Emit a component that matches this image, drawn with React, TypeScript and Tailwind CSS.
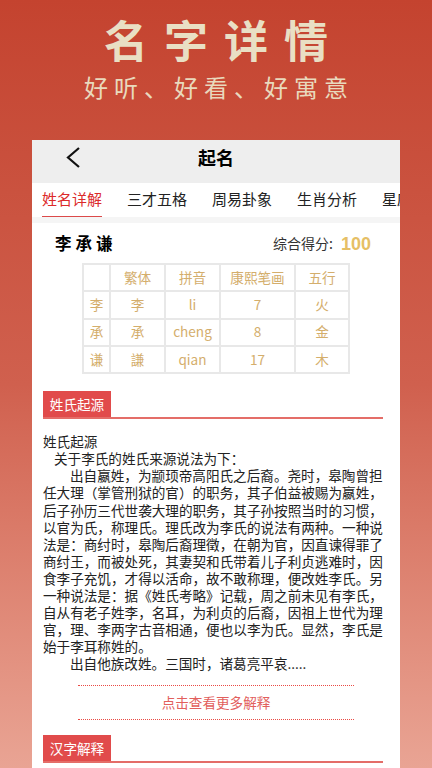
const cjk = { fontFamily: '"Noto Sans CJK SC", "Noto Sans", sans-serif' };

const tabs = ["姓名详解", "三才五格", "周易卦象", "生肖分析", "星座运势"];
const rows = [
  ["李", "李", "li", "7", "火"],
  ["承", "承", "cheng", "8", "金"],
  ["谦", "謙", "qian", "17", "木"],
];
const head = ["", "繁体", "拼音", "康熙笔画", "五行"];
const widths = ["w-[27px]", "w-[55px]", "w-[55px]", "w-[75px]", "w-[54px]"];

function SectionHead({ title }: { title: string }) {
  return (
    <div className="flex border-b-2 border-[#e46d68] w-[340px]">
      <div className="w-[68px] h-[26px] bg-[#e14b4b] text-white text-[13.6px] leading-[26px] text-center">{title}</div>
    </div>
  );
}

function Cell({ text, w }: { text: string; w: string }) {
  return (
    <td className={`${w} h-[27.3px] p-0 border-2 border-[#e8e8e8] text-center text-[13.6px] leading-none text-[#d4ae6c]`}>{text}</td>
  );
}

export default function App() {
  return (
    <div style={cjk} className="w-[432px] h-[768px] overflow-hidden flex flex-col items-center bg-gradient-to-b from-[#c4432f] via-[#d0604e] to-[#e9a494]">
      <h1 className="mt-[10px] h-[60px] leading-[58px] text-[44px] font-bold tracking-[16px] pl-[16px] text-[#e9dfc4] whitespace-nowrap">名字详情</h1>
      <p className="h-[30px] leading-[34px] text-[24px] tracking-[6px] pl-[6px] text-[#e9d9bd] whitespace-nowrap">好听、好看、好寓意</p>

      <div className="mt-[40px] w-[368px] flex-1 bg-white flex flex-col overflow-hidden">
        <div className="relative h-[43px] shrink-0 bg-[#eeeeee] flex items-center justify-center">
          <svg className="absolute left-[32px] top-[5px]" width="18" height="24" viewBox="0 0 18 24" fill="none" stroke="#111" strokeWidth="2.2">
            <path d="M15 3 L4 12.5 L15 22" />
          </svg>
          <span className="text-[18px] font-bold text-black -mt-[9px]">起名</span>
        </div>

        <div className="h-[34px] shrink-0 flex gap-[25px] pl-[10px] whitespace-nowrap overflow-hidden">
          {tabs.map((t, i) => (
            <div key={t} className={`h-[34px] leading-[32px] text-[15px] border-b ${i === 0 ? "text-[#dc2a2a] border-[#dc4a4a]" : "text-[#222] border-transparent"}`}>{t}</div>
          ))}
        </div>
        <div className="h-[6px] shrink-0 bg-[#f5f5f5]" />

        <div className="flex items-center justify-between h-[40px] pl-[23px] pr-[29px] pt-[1px] shrink-0">
          <span className="text-[16.5px] font-bold tracking-[4px] text-black">李承谦</span>
          <span className="flex items-center gap-[8px]">
            <span className="text-[14px] text-[#333]">综合得分:</span>
            <span className="text-[18px] font-bold text-[#e6bf66] mt-[1px]" style={{ fontFamily: '"Liberation Sans", sans-serif' }}>100</span>
          </span>
        </div>

        <table className="ml-[50px] w-[266px] shrink-0 table-fixed border-collapse">
          <tbody>
            <tr>
              {head.map((h, i) => <Cell key={i} text={h} w={widths[i]} />)}
            </tr>
            {rows.map((r) => (
              <tr key={r[0]}>
                {r.map((c, i) => <Cell key={i} text={c} w={widths[i]} />)}
              </tr>
            ))}
          </tbody>
        </table>

        <div className="mt-[17px] ml-[11px] shrink-0"><SectionHead title="姓氏起源" /></div>

        <div className="mt-[14px] ml-[11px] w-[340px] text-[13.6px] leading-[17.1px] text-[#222] shrink-0">
          <p>姓氏起源</p>
          <p className="indent-[11px]">关于李氏的姓氏来源说法为下：</p>
          <p className="indent-[27px]">出自嬴姓，为颛顼帝高阳氏之后裔。尧时，皋陶曾担任大理（掌管刑狱的官）的职务，其子伯益被赐为嬴姓，后子孙历三代世袭大理的职务，其子孙按照当时的习惯，以官为氏，称理氏。理氏改为李氏的说法有两种。一种说法是：商纣时，皋陶后裔理徵，在朝为官，因直谏得罪了商纣王，而被处死，其妻契和氏带着儿子利贞逃难时，因食李子充饥，才得以活命，故不敢称理，便改姓李氏。另一种说法是：据《姓氏考略》记载，周之前未见有李氏，自从有老子姓李，名耳，为利贞的后裔，因祖上世代为理官，理、李两字古音相通，便也以李为氏。显然，李氏是始于李耳称姓的。</p>
          <p className="indent-[27px]">出自他族改姓。三国时，诸葛亮平哀.....</p>
        </div>

        <div className="mt-[12px] ml-[46px] w-[276px] h-[35px] shrink-0 border-y border-dotted border-[#ea4a44] flex items-center justify-center text-[13.6px] text-[#e2605c]">点击查看更多解释</div>

        <div className="mt-[15px] ml-[11px] shrink-0"><SectionHead title="汉字解释" /></div>
      </div>
    </div>
  );
}
